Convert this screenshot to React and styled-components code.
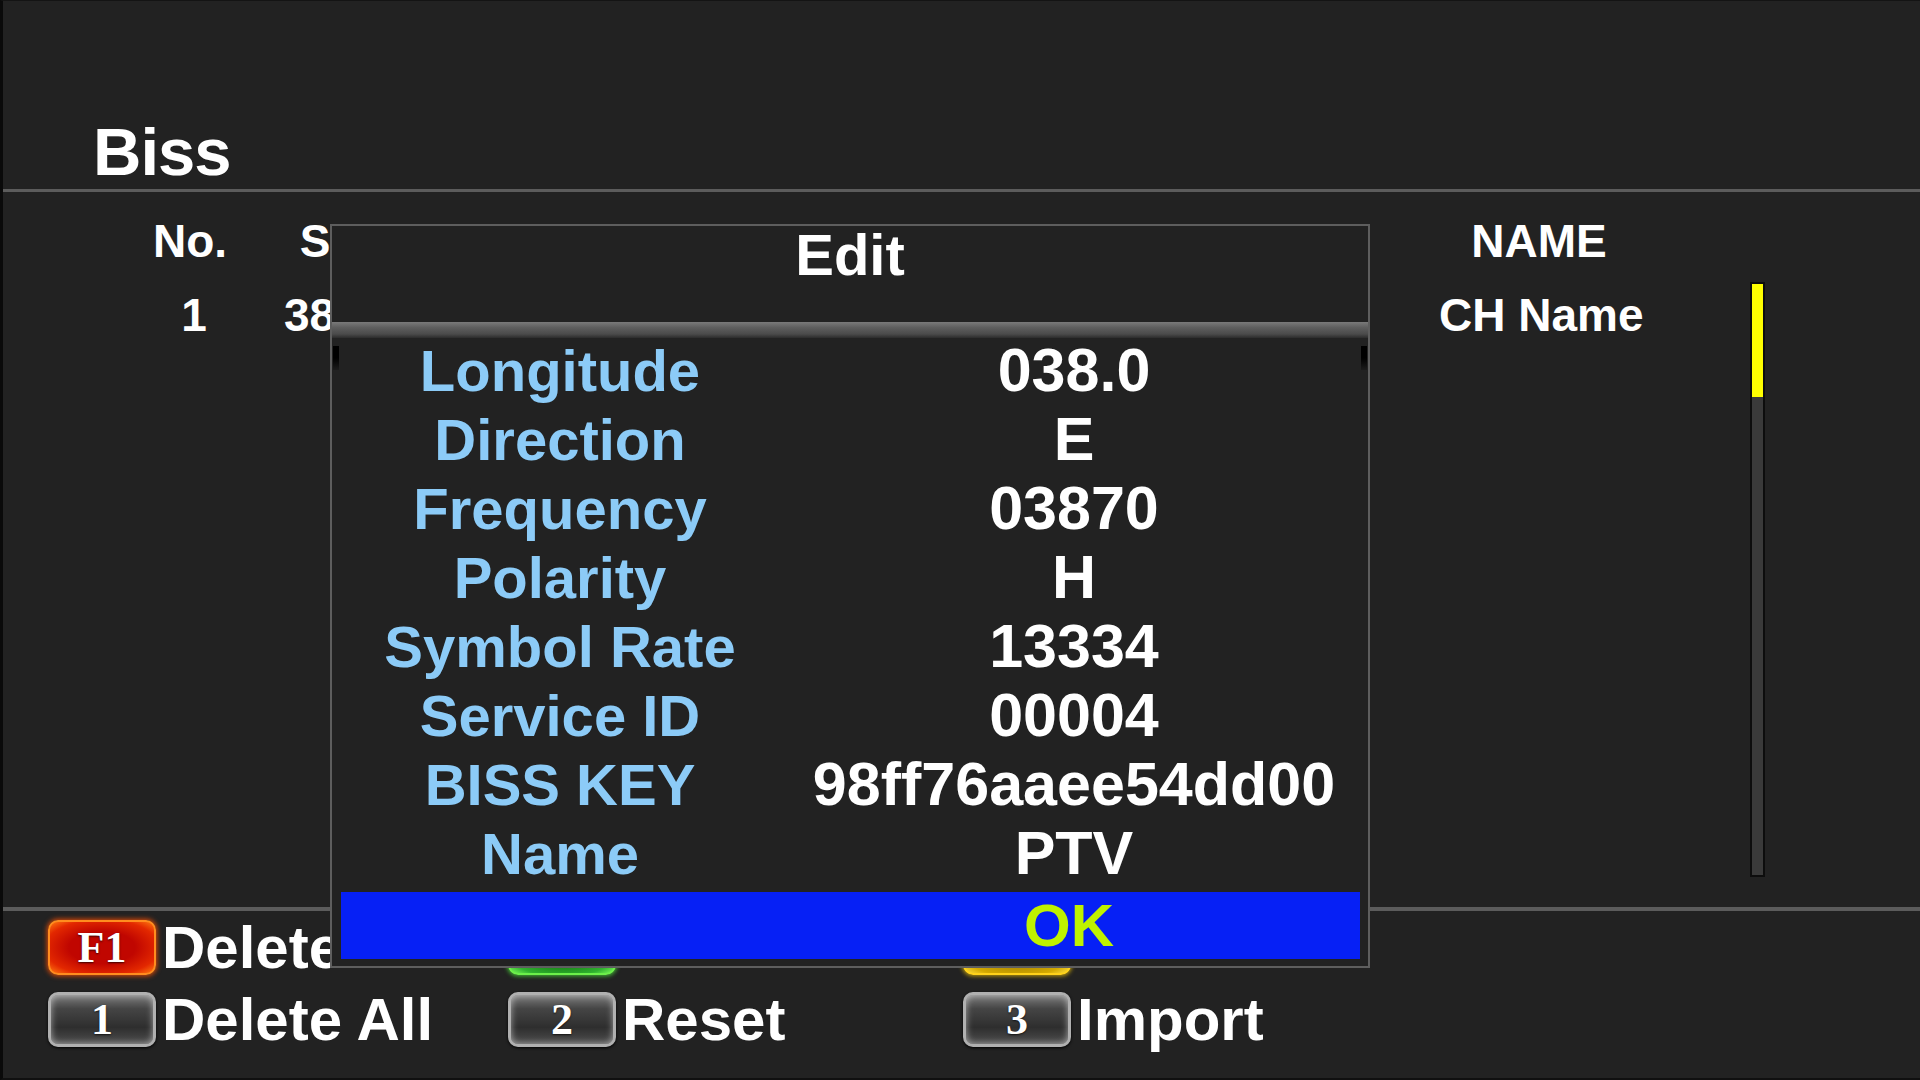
import React from "react";
import styled, { createGlobalStyle, css } from "styled-components";

const GlobalStyle = createGlobalStyle`
  html, body {
    margin: 0;
    padding: 0;
    background: #222;
  }
  body {
    font-family: "Liberation Sans", Arial, sans-serif;
    overflow: hidden;
  }
`;

const fields = [
  { label: "Longitude", value: "038.0" },
  { label: "Direction", value: "E" },
  { label: "Frequency", value: "03870" },
  { label: "Polarity", value: "H" },
  { label: "Symbol Rate", value: "13334" },
  { label: "Service ID", value: "00004" },
  { label: "BISS KEY", value: "98ff76aaee54dd00" },
  { label: "Name", value: "PTV" },
];

// green / yellow keys sit under the popup, only their bottom edge shows
const keys = [
  { id: "f1", cap: "F1", color: "red", text: "Delete" },
  { id: "f2", cap: "", color: "green", text: "" },
  { id: "f3", cap: "", color: "yellow", text: "" },
  { id: "k1", cap: "1", color: "gray", text: "Delete All" },
  { id: "k2", cap: "2", color: "gray", text: "Reset" },
  { id: "k3", cap: "3", color: "gray", text: "Import" },
];

const App = () => {
  return (
    <>
      <GlobalStyle />
      <Screen>
        <Header>
          <Title>Biss</Title>
        </Header>
        <Divider />
        <Main>
          <Table>
            <Cell>No.</Cell>
            <Cell>SAT</Cell>
            <Cell />
            <Cell>NAME</Cell>
            <Cell $shift>1</Cell>
            <Cell>38.0E</Cell>
            <Cell />
            <Cell>CH Name</Cell>
          </Table>
          <ScrollTrack>
            <ScrollThumb />
          </ScrollTrack>
        </Main>
        <Divider $thick />
        <Footer>
          {keys.map((k) => (
            <KeyItem key={k.id}>
              <KeyCap $color={k.color}>{k.cap}</KeyCap>
              {k.text && <KeyLabel>{k.text}</KeyLabel>}
            </KeyItem>
          ))}
        </Footer>

        {/* edit popup */}
        <Dialog>
          <DialogTitle>Edit</DialogTitle>
          <TitleBar />
          <Fields>
            {fields.map((f) => (
              <FieldRow key={f.label}>
                <FieldLabel>{f.label}</FieldLabel>
                <FieldValue>{f.value}</FieldValue>
              </FieldRow>
            ))}
          </Fields>
          <OkBar>
            <span />
            <OkText>OK</OkText>
          </OkBar>
        </Dialog>
      </Screen>
    </>
  );
};

export default App;

const Screen = styled.div`
  position: relative;
  width: 1920px;
  height: 1080px;
  box-sizing: border-box;
  border-left: 3px solid #0a0a0a;
  border-top: 1px solid #141414;
  border-bottom: 2px solid #101010;
  background: #222;
  color: #fff;
  font-weight: bold;
  display: flex;
  flex-direction: column;
  overflow: hidden;
`;

const Header = styled.div`
  height: 188px;
  flex-shrink: 0;
  display: flex;
  align-items: flex-end;
  padding: 0 0 4px 90px;
  box-sizing: border-box;
`;

const Title = styled.h1`
  margin: 0;
  font-size: 67px;
  line-height: 1;
  font-weight: bold;
  letter-spacing: -1px;
`;

const Divider = styled.div`
  flex-shrink: 0;
  height: ${(p) => (p.$thick ? "4px" : "3px")};
  background: #5c5c5c;
`;

const Main = styled.div`
  flex: 1;
  display: flex;
  min-height: 0;
`;

const Table = styled.div`
  flex: 1;
  display: grid;
  grid-template-columns: 140px 168px 1fr 200px;
  grid-auto-rows: 74px;
  align-content: start;
  padding: 12px 111px 0 117px;
  font-size: 46px;
  line-height: 74px;
  text-align: center;
`;

const Cell = styled.div`
  white-space: nowrap;
  padding-left: ${(p) => (p.$shift ? "8px" : "0")};
`;

const ScrollTrack = styled.div`
  width: 15px;
  height: 595px;
  margin: 90px 155px 0 0;
  box-sizing: border-box;
  border: 2px solid #0d0d0d;
  background: #3a3a3a;
`;

const ScrollThumb = styled.div`
  height: 113px;
  background: #ffff00;
`;

const Footer = styled.div`
  height: 167px;
  flex-shrink: 0;
  box-sizing: border-box;
  padding: 9px 0 0 45px;
  display: grid;
  grid-template-columns: 460px 455px 400px;
  grid-template-rows: 55px 55px;
  row-gap: 17px;
`;

const KeyItem = styled.div`
  display: flex;
  align-items: center;
  gap: 6px;
`;

const capColors = {
  red: css`
    background: radial-gradient(ellipse at center, #c00600 45%, #e32800 78%, #ff7a10 100%);
    border: 2px solid #ff8c1f;
    box-shadow: 0 0 5px 1px rgba(255, 80, 0, 0.85);
  `,
  green: css`
    background: radial-gradient(ellipse at center, #137a13 45%, #2fb22f 80%, #7dff5a 100%);
    border: 2px solid #6cf04a;
    box-shadow: 0 0 4px 1px rgba(80, 255, 60, 0.7);
  `,
  yellow: css`
    background: radial-gradient(ellipse at center, #a88400 45%, #d4aa00 80%, #ffe040 100%);
    border: 2px solid #ffd21a;
    box-shadow: 0 0 4px 1px rgba(255, 210, 0, 0.7);
  `,
  gray: css`
    background: linear-gradient(180deg, #7c7c7c 0%, #454545 28%, #2e2e2e 66%, #4e4e4e 100%);
    border: 3px solid #b0b0b0;
    box-shadow: inset 0 0 7px rgba(255, 255, 255, 0.55), 0 1px 3px #000;
  `,
};

const KeyCap = styled.div`
  width: 108px;
  height: 55px;
  flex-shrink: 0;
  box-sizing: border-box;
  border-radius: 10px;
  display: flex;
  align-items: center;
  justify-content: center;
  font-family: "Liberation Serif", "Times New Roman", serif;
  font-weight: bold;
  font-size: 44px;
  color: #fff;
  text-shadow: 0 1px 2px rgba(0, 0, 0, 0.7);
  ${(p) => capColors[p.$color]}
`;

const KeyLabel = styled.span`
  font-size: 60px;
  line-height: 1;
  white-space: nowrap;
`;

const Dialog = styled.div`
  position: absolute;
  left: 327px;
  top: 223px;
  width: 1040px;
  box-sizing: border-box;
  border: 2px solid #5e5e5e;
  background: #222;
  padding-bottom: 7px;
`;

const DialogTitle = styled.div`
  height: 96px;
  font-size: 58px;
  line-height: 58px;
  text-align: center;
`;

const TitleBar = styled.div`
  height: 16px;
  background: linear-gradient(180deg, #7a7a7a 0%, #5e5e5e 35%, #4b4b4b 75%, #2c2c2c 100%);
`;

const Fields = styled.div`
  position: relative;
  margin-top: -2px;

  &::before,
  &::after {
    content: "";
    position: absolute;
    top: 10px;
    width: 6px;
    height: 24px;
    background: linear-gradient(180deg, #000 0%, #000 50%, rgba(0, 0, 0, 0.2) 100%);
  }
  &::before {
    left: 1px;
  }
  &::after {
    right: 1px;
  }
`;

const FieldRow = styled.div`
  display: grid;
  grid-template-columns: 456px 572px;
  height: 69px;
  align-items: center;
  line-height: 1;
  text-align: center;
  white-space: nowrap;
`;

const FieldLabel = styled.div`
  color: #8ccbf7;
  font-size: 58px;
`;

const FieldValue = styled.div`
  color: #fff;
  font-size: 61px;
`;

const OkBar = styled.div`
  display: grid;
  grid-template-columns: 447px 572px;
  align-items: center;
  height: 67px;
  margin: 4px 8px 0 9px;
  background: #0620f5;
`;

const OkText = styled.div`
  color: #bff200;
  font-size: 60px;
  line-height: 1;
  text-align: center;
  padding-right: 10px;
`;
